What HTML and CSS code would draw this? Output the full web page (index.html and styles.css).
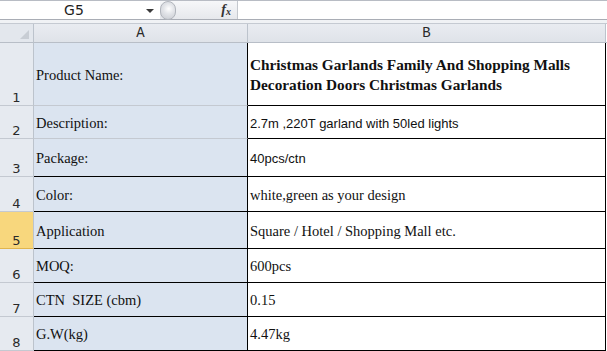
FILE: index.html
```html
<!DOCTYPE html>
<html>
<head>
<meta charset="utf-8">
<link rel="stylesheet" href="styles.css">
</head>
<body>
<div class="app">
  <div class="fbar">
    <div class="namebox"><span class="ref">G5</span><span class="drop"></span></div>
    <div class="fxzone"><span class="grip"></span><span class="fx">f<sub>x</sub></span></div>
    <div class="finput"></div>
  </div>
  <div class="gap"></div>
  <div class="sheet">
    <div class="corner"><span class="tri"></span></div>
    <div class="colh">A</div>
    <div class="colh">B</div>
    <div class="after hdr"></div>

    <div class="rh r1">1</div>
    <div class="ca r1">Product Name:</div>
    <div class="cb r1 bold">Christmas Garlands Family And Shopping Malls Decoration Doors Christmas Garlands</div>
    <div class="after"></div>

    <div class="rh r2">2</div>
    <div class="ca r2 soft">Description:</div>
    <div class="cb r2 sans">2.7m ,220T garland with 50led lights</div>
    <div class="after"></div>

    <div class="rh r3">3</div>
    <div class="ca r3">Package:</div>
    <div class="cb r3 sans">40pcs/ctn</div>
    <div class="after"></div>

    <div class="rh r4">4</div>
    <div class="ca r4">Color:</div>
    <div class="cb r4">white,green as your design</div>
    <div class="after"></div>

    <div class="rh r5 sel">5</div>
    <div class="ca r5">Application</div>
    <div class="cb r5">Square / Hotel / Shopping Mall etc.</div>
    <div class="after"></div>

    <div class="rh r6">6</div>
    <div class="ca r6">MOQ:</div>
    <div class="cb r6">600pcs</div>
    <div class="after"></div>

    <div class="rh r7">7</div>
    <div class="ca r7">CTN&nbsp; SIZE (cbm)</div>
    <div class="cb r7">0.15</div>
    <div class="after"></div>

    <div class="rh r8">8</div>
    <div class="ca r8">G.W(kg)</div>
    <div class="cb r8">4.47kg</div>
    <div class="after"></div>
  </div>
</div>
</body>
</html>
```
FILE: styles.css
```css
html, body {
  margin: 0;
  padding: 0;
  background: #ffffff;
  overflow: hidden;
}
.app {
  width: 607px;
  height: 351px;
  display: flex;
  flex-direction: column;
}
.fbar {
  height: 19px;
  display: flex;
  border-top: 1px solid #b8bcc4;
  border-bottom: 1px solid #a9adb5;
  background: #ffffff;
}
.namebox {
  width: 160px;
  display: flex;
  align-items: center;
  position: relative;
}
.ref {
  flex: 1;
  text-align: center;
  font-family: "DejaVu Sans", sans-serif;
  font-size: 14px;
  color: #1e1e1e;
  padding-left: 2px;
}
.drop {
  width: 0;
  height: 0;
  border-left: 4px solid transparent;
  border-right: 4px solid transparent;
  border-top: 4px solid #3a3a3a;
  margin-right: 6px;
  margin-top: 1px;
}
.fxzone {
  width: 77px;
  display: flex;
  align-items: center;
  justify-content: flex-end;
  background: linear-gradient(#f6f7f9, #e6e8ec);
  border-right: 1px solid #c4c8ce;
  position: relative;
}
.grip {
  position: absolute;
  left: 0;
  top: 0;
  width: 16px;
  height: 19px;
  border-radius: 9px;
  background: radial-gradient(circle at 55% 40%, #ffffff 0, #e3e5e9 40%, #c6c9cf 100%);
  border: 1px solid #b1b5bc;
  box-sizing: border-box;
}
.fx {
  font-family: "Liberation Serif", serif;
  font-style: italic;
  font-weight: bold;
  font-size: 14px;
  color: #333;
  margin-right: 6px;
}
.fx sub {
  font-size: 10px;
  vertical-align: -1px;
}
.finput {
  flex: 1;
}
.gap {
  height: 3px;
  background: #f0f2f5;
  border-bottom: 1px solid #c5cad2;
}
.sheet {
  display: grid;
  grid-template-columns: 34px 214px 358px 1fr;
  grid-template-rows: 19px 63px 33px 38px 35px 37px 34px 34px 34px;
}
.sheet > div {
  box-sizing: border-box;
}
.corner {
  background: #e3e7ed;
  border-right: 1px solid #bcc3cc;
  border-bottom: 1px solid #b8bec7;
  position: relative;
}
.tri {
  position: absolute;
  right: 4px;
  bottom: 3px;
  width: 0;
  height: 0;
  border-left: 9px solid transparent;
  border-bottom: 9px solid #c8cdd4;
}
.colh {
  background: linear-gradient(#e9ecf1, #dfe3e9);
  border-right: 1px solid #bcc3cc;
  border-bottom: 1px solid #b8bec7;
  text-align: center;
  font-family: "Liberation Mono", monospace;
  font-size: 14px;
  line-height: 18px;
  color: #2a2a2a;
}
.after {
  background: #ffffff;
}
.after.hdr {
  background: #ffffff;
  border-bottom: 1px solid #b8bec7;
}
.rh {
  background: #e6eaf0;
  border-right: 1px solid #bcc3cc;
  border-bottom: 1px solid #c4c9d1;
  font-family: "DejaVu Sans", sans-serif;
  font-size: 13px;
  color: #2a2a2a;
  display: flex;
  align-items: flex-end;
  justify-content: center;
  padding-bottom: 0;
  line-height: 15px;
}
.rh.sel {
  background: #f8d77d;
  border-bottom-color: #e1b54d;
}
.ca {
  background: #dbe4f0;
  border-right: 1px solid #000000;
  border-bottom: 1px solid #000000;
  padding-left: 2px;
  padding-top: 2px;
  display: flex;
  align-items: center;
  font-family: "Liberation Serif", serif;
  font-size: 14.5px;
  color: #111;
}
.ca.r1, .ca.r2 {
  border-bottom-color: #c4c9d1;
}
.cb {
  background: #ffffff;
  border-right: 1px solid #000000;
  border-bottom: 1px solid #000000;
  padding-left: 2px;
  padding-top: 2px;
  display: flex;
  align-items: center;
  font-family: "Liberation Serif", serif;
  font-size: 14.5px;
  color: #111;
}
.cb.bold {
  font-weight: bold;
  font-size: 15.3px;
  line-height: 20px;
  padding-right: 10px;
}
.cb.sans {
  font-family: "Liberation Sans", sans-serif;
  font-size: 13px;
}
```
